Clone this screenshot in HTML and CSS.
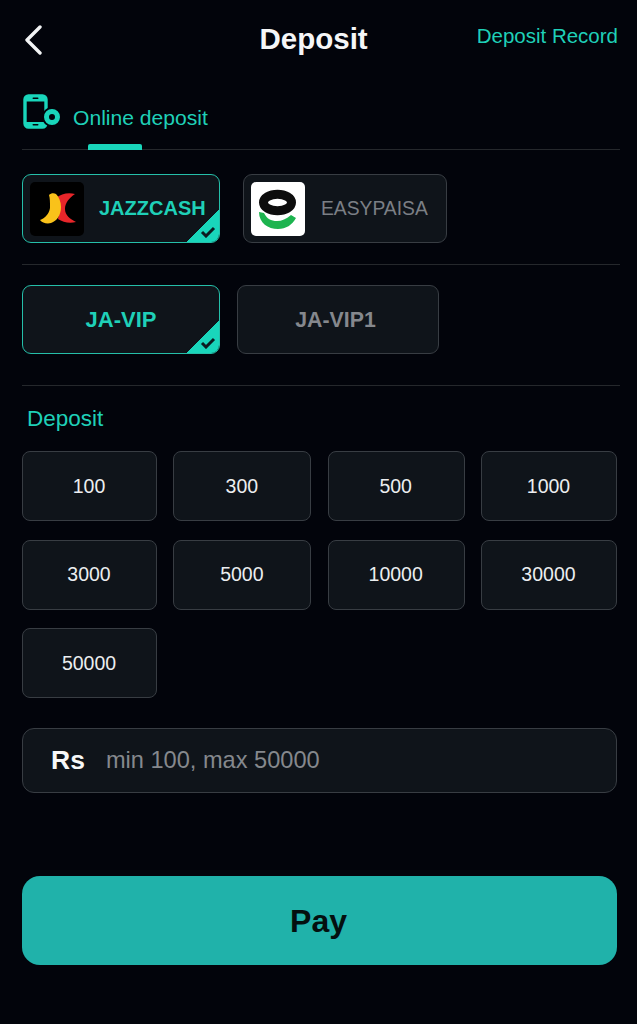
FILE: index.html
```html
<!DOCTYPE html>
<html lang="en">
<head>
    <meta charset="UTF-8">
    <meta name="viewport" content="width=device-width, initial-scale=1.0">
    <title>Deposit</title>
    <link rel="stylesheet" href="styles.css">
</head>
<body>
    <div class="page">
        <header class="top-bar">
            <svg class="back-icon" viewBox="0 0 20 30" width="20" height="30">
                <path d="M17 2 L4 15 L17 28" fill="none" stroke="#f2f4f5" stroke-width="3.4" stroke-linecap="round" stroke-linejoin="round"/>
            </svg>
            <h1>Deposit</h1>
            <a class="record-link">Deposit Record</a>
        </header>

        <div class="tabs">
            <svg class="tab-icon" viewBox="0 0 38 36" width="38" height="36">
                <rect x="2" y="2" width="21" height="31" rx="3.5" fill="none" stroke="#19d6bb" stroke-width="3.4"/>
                <path d="M2 5 Q2 2 5 2 H20 Q23 2 23 5 V7.5 H2 Z" fill="#19d6bb"/>
                <path d="M2 28 H23 V30 Q23 33 20 33 H5 Q2 33 2 30 Z" fill="#19d6bb"/>
                <rect x="9.5" y="3.4" width="6" height="1.6" rx="0.8" fill="#02040b"/>
                <rect x="9.5" y="30" width="6" height="1.6" rx="0.8" fill="#02040b"/>
                <circle cx="29" cy="23" r="10" fill="#02040b"/>
                <circle cx="29" cy="23" r="5.5" fill="none" stroke="#19d6bb" stroke-width="5"/>
            </svg>
            <div class="tab-label">Online deposit</div>
            <div class="tab-underline"></div>
        </div>

        <section class="option-row pay-row">
            <div class="option selected jazz">
                <svg class="logo" viewBox="0 0 54 54" width="54" height="54">
                    <rect width="54" height="54" rx="5" fill="#000"/>
                    <path d="M45 12 C38 10 31 12 26 16 L30 25 L28 37 C33 40 39 42 46 40 C40 37 35 33 35 27 C35 21 39 16 45 12 Z" fill="#e8262a"/>
                    <path d="M19 13 C21 11 24 11 26 12 C29 15 31 20 31 25 C31 33 27 39 21 41 C17 42 12 41 10 38 C15 36 19 32 20 26 C20 20 20 16 19 13 Z" fill="#f9c21a"/>
                </svg>
                <span class="option-name active-text">JAZZCASH</span>
                <span class="corner">
                    <svg viewBox="0 0 16 12" width="16" height="12"><path d="M2 6 L6 10 L14 2" fill="none" stroke="#0c1c20" stroke-width="3"/></svg>
                </span>
            </div>
            <div class="option easy">
                <svg class="logo" viewBox="0 0 54 54" width="54" height="54">
                    <rect width="54" height="54" rx="5" fill="#fff"/>
                    <ellipse cx="26.5" cy="20.5" rx="14" ry="8.3" fill="none" stroke="#0d0d0d" stroke-width="9"/>
                    <path d="M8 30 C8 41 17 47 27 47 C35 47 41 43 45 36 L40 33 C35 37 31 39 26 39 C20 39 16 37 13 31 Z" fill="#1db44f"/>
                </svg>
                <span class="option-name plain-name">EASYPAISA</span>
            </div>
        </section>

        <section class="option-row channel-row">
            <div class="option selected channel">
                <span class="channel-name active-text">JA-VIP</span>
                <span class="corner">
                    <svg viewBox="0 0 16 12" width="16" height="12"><path d="M2 6 L6 10 L14 2" fill="none" stroke="#0c1c20" stroke-width="3"/></svg>
                </span>
            </div>
            <div class="option channel channel-two">
                <span class="channel-name muted-text">JA-VIP1</span>
            </div>
        </section>

        <div class="section-title">Deposit</div>

        <div class="amounts">
            <div class="amount">100</div>
            <div class="amount">300</div>
            <div class="amount">500</div>
            <div class="amount">1000</div>
            <div class="amount">3000</div>
            <div class="amount">5000</div>
            <div class="amount">10000</div>
            <div class="amount">30000</div>
            <div class="amount">50000</div>
        </div>

        <div class="amount-input">
            <span class="currency">Rs</span>
            <span class="placeholder">min 100, max 50000</span>
        </div>

        <button class="pay-btn">Pay</button>
    </div>
</body>
</html>
```

FILE: styles.css
```css
:root {
    --teal: #19d6bb;
    --card-bg: #0f141a;
    --card-border: #383d43;
    --line: #25282c;
    --bg-color: #02040b;
}

* {
    box-sizing: border-box;
}

body {
    margin: 0;
    background: var(--bg-color);
    font-family: "Liberation Sans", Arial, sans-serif;
    color: #fff;
}

.page {
    width: 637px;
    height: 1024px;
    padding: 0 20px 0 22px;
    overflow: hidden;
}

.top-bar {
    position: relative;
    height: 80px;
    display: flex;
    align-items: flex-start;
    justify-content: space-between;
}

.back-icon {
    margin-top: 25px;
    margin-left: 1px;
}

.top-bar h1 {
    position: absolute;
    left: 237.5px;
    top: 22px;
    margin: 0;
    font-size: 29.5px;
    line-height: 34px;
    font-weight: 700;
    color: #f5f6f7;
}

.record-link {
    margin-top: 24px;
    margin-right: -1px;
    font-size: 20.5px;
    line-height: 24px;
    color: #1fd0b8;
}

.tabs {
    position: relative;
    height: 70px;
    margin-right: -3px;
    border-bottom: 1px solid var(--line);
}

.tab-icon {
    position: absolute;
    left: 1px;
    top: 14px;
}

.tab-label {
    position: absolute;
    left: 51px;
    top: 25px;
    font-size: 21.1px;
    line-height: 25px;
    color: #1fd0b8;
}

.tab-underline {
    position: absolute;
    left: 66px;
    bottom: -1px;
    width: 54px;
    height: 6px;
    border-radius: 2px 2px 0 0;
    background: var(--teal);
}

.option-row {
    display: flex;
    margin-right: -3px;
    border-bottom: 1px solid var(--line);
}

.pay-row {
    gap: 23px;
    padding: 24px 0 21px;
}

.channel-row {
    gap: 17px;
    padding: 20px 0 31px;
}

.option {
    position: relative;
    height: 69px;
    display: flex;
    align-items: center;
    background: var(--card-bg);
    border: 1px solid var(--card-border);
    border-radius: 9px;
    overflow: hidden;
}

.option.selected {
    border-color: #25bfa9;
}

.jazz {
    width: 198px;
    padding-left: 7px;
}

.easy {
    width: 204px;
    padding-left: 7px;
}

.channel {
    width: 198px;
    justify-content: center;
}

.channel-two {
    width: 202px;
    padding: 1px 5px 0 0;
}

.option-name {
    font-size: 20px;
    margin-left: 15px;
}

.active-text {
    color: #1fd0b8;
    font-weight: 700;
}

.plain-name {
    font-size: 19.3px;
    color: #7b7f85;
    margin-left: 16px;
}

.channel-name {
    font-size: 22px;
}

.muted-text {
    font-size: 21.3px;
    color: #85888d;
    font-weight: 700;
}

/* selected triangle with tick */
.corner {
    position: absolute;
    right: 0;
    bottom: 0;
    width: 32px;
    height: 32px;
    background: linear-gradient(135deg, transparent 50%, var(--teal) 50%);
}

.corner svg {
    position: absolute;
    right: 3px;
    bottom: 4px;
}

.section-title {
    margin: 20px 0 0 5px;
    font-size: 22.5px;
    line-height: 25px;
    color: #1fd0b8;
}

.amounts {
    display: grid;
    grid-template-columns: 135px 138px 137px 136px;
    grid-auto-rows: 70px;
    column-gap: 16.33px;
    row-gap: 18.5px;
    margin-top: 20px;
}

.amount {
    display: flex;
    align-items: center;
    justify-content: center;
    padding-right: 1px;
    background: var(--card-bg);
    border: 1px solid var(--card-border);
    border-radius: 8px;
    font-size: 19.5px;
    color: #eceef0;
}

.amount-input {
    display: flex;
    align-items: center;
    height: 65px;
    margin-top: 30px;
    padding-left: 28px;
    background: var(--card-bg);
    border: 1px solid var(--card-border);
    border-radius: 12px;
}

.currency {
    font-size: 26.5px;
    font-weight: 700;
    color: #f7f8f8;
}

.placeholder {
    margin-left: 21px;
    font-size: 23.6px;
    color: #85888d;
}

.pay-btn {
    display: block;
    width: 100%;
    height: 89px;
    margin-top: 83px;
    padding: 1px 2px 0 0;
    border: none;
    border-radius: 18px;
    background: #20b2aa;
    font-family: inherit;
    font-size: 32px;
    font-weight: 700;
    color: #04100f;
}
```
